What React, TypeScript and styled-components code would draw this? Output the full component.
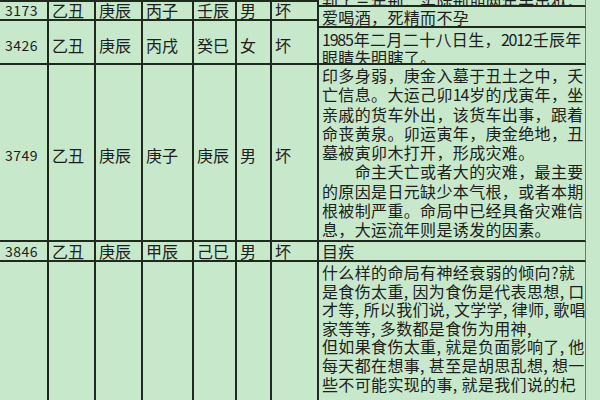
import React from "react";
import styled, { createGlobalStyle } from "styled-components";

const Global = createGlobalStyle`
  html, body { margin: 0; padding: 0; background: #c7e8cb; }
  body { width: 600px; height: 400px; overflow: hidden; font-family: "Noto Sans CJK SC", sans-serif; }
`;

const Sheet = styled.div`
  display: grid;
  grid-template-columns: 49px 47px 47px 51px 43px 35px 47px 267px 1fr;
  grid-template-rows: 1px 6px 14px 7px 37px 177px 20px 160px;
  width: 600px;
  height: 400px;
  overflow: hidden;
  background: #c7e8cb;
  color: #1d211d;
`;

const Cell = styled.div<{ $r: string; $c: number; $first?: boolean; $drop?: number }>`
  grid-row: ${(p) => p.$r};
  grid-column: ${(p) => p.$c};
  border-right: 2px solid #1f2a1f;
  border-bottom: 2px solid #1f2a1f;
  display: flex;
  align-items: center;
  padding-left: ${(p) => (p.$first ? "5px" : "3px")};
  padding-top: ${(p) => p.$drop ?? 0}px;
  font-size: ${(p) => (p.$first ? "14px" : "16px")};
  letter-spacing: ${(p) => (p.$first ? "0.5px" : "0")};
  white-space: nowrap;
  overflow: hidden;
`;

const Note = styled.div<{ $r: string; $lh: number; $pt: number; $end?: boolean }>`
  grid-row: ${(p) => p.$r};
  grid-column: 8;
  border-right: 1px solid #687a69;
  border-bottom: 2px solid #1f2a1f;
  display: flex;
  flex-direction: column;
  justify-content: ${(p) => (p.$end ? "flex-end" : "flex-start")};
  padding: ${(p) => p.$pt}px 0 0 3px;
  font-size: 16px;
  line-height: ${(p) => p.$lh}px;
  letter-spacing: 0.35px;
  white-space: nowrap;
  overflow: hidden;
`;

const Line = styled.div<{ $cut?: boolean }>`
  margin-bottom: ${(p) => (p.$cut ? "-5px" : "0")};
`;

const Num = styled.span`
  letter-spacing: -1.2px;
  margin-right: 1px;
`;

type Row = { r: string; v: string[]; drop?: number };

const rows: Row[] = [
  { r: "1 / 2", v: ["", "", "", "", "", "", ""] },
  { r: "2 / 4", v: ["3173", "乙丑", "庚辰", "丙子", "壬辰", "男", "坏"] },
  { r: "4 / 6", v: ["3426", "乙丑", "庚辰", "丙戌", "癸巳", "女", "坏"], drop: 6 },
  { r: "6 / 7", v: ["3749", "乙丑", "庚辰", "庚子", "庚辰", "男", "坏"], drop: 4 },
  { r: "7 / 8", v: ["3846", "乙丑", "庚辰", "甲辰", "己巳", "男", "坏"] },
  { r: "8 / 9", v: ["", "", "", "", "", "", ""] },
];

const case3749: React.ReactNode[] = [
  "印多身弱，庚金入墓于丑土之中，夭",
  <>亡信息。大运己卯<Num>14</Num>岁的戊寅年，坐</>,
  "亲戚的货车外出，该货车出事，跟着",
  "命丧黄泉。卯运寅年，庚金绝地，丑",
  "墓被寅卯木打开，形成灾难。",
  "　　命主夭亡或者大的灾难，最主要",
  "的原因是日元缺少本气根，或者本期",
  "根被制严重。命局中已经具备灾难信",
  "息，大运流年则是诱发的因素。",
];

const lastNote = [
  "什么样的命局有神经衰弱的倾向?就",
  "是食伤太重, 因为食伤是代表思想, 口",
  "才等, 所以我们说, 文学学, 律师, 歌唱",
  "家等等, 多数都是食伤为用神,",
  "但如果食伤太重, 就是负面影响了, 他",
  "每天都在想事, 甚至是胡思乱想, 想一",
  "些不可能实现的事, 就是我们说的杞",
];

export default function App() {
  return (
    <>
      <Global />
      <Sheet>
        {rows.map((row) =>
          row.v.map((val, i) => (
            <Cell key={row.r + i} $r={row.r} $c={i + 1} $first={i === 0} $drop={row.drop}>
              {val}
            </Cell>
          ))
        )}
        <Note $r="1 / 3" $lh={18} $pt={0} $end>
          <Line $cut>判了三年刑，实际刑期两年半出狱。</Line>
        </Note>
        <Note $r="3 / 5" $lh={18} $pt={1}>
          <Line>爱喝酒，死精而不孕</Line>
        </Note>
        <Note $r="5 / 6" $lh={18} $pt={2}>
          <Line>
            <Num>1985</Num>年二月二十八日生，<Num>2012</Num>壬辰年
          </Line>
          <Line>眼睛失明瞎了。</Line>
        </Note>
        <Note $r="6 / 7" $lh={19.3} $pt={1}>
          {case3749.map((t, i) => (
            <Line key={i}>{t}</Line>
          ))}
        </Note>
        <Note $r="7 / 8" $lh={18} $pt={0}>
          <Line>目疾</Line>
        </Note>
        <Note $r="8 / 9" $lh={18.6} $pt={1}>
          {lastNote.map((t, i) => (
            <Line key={i}>{t}</Line>
          ))}
        </Note>
      </Sheet>
    </>
  );
}
